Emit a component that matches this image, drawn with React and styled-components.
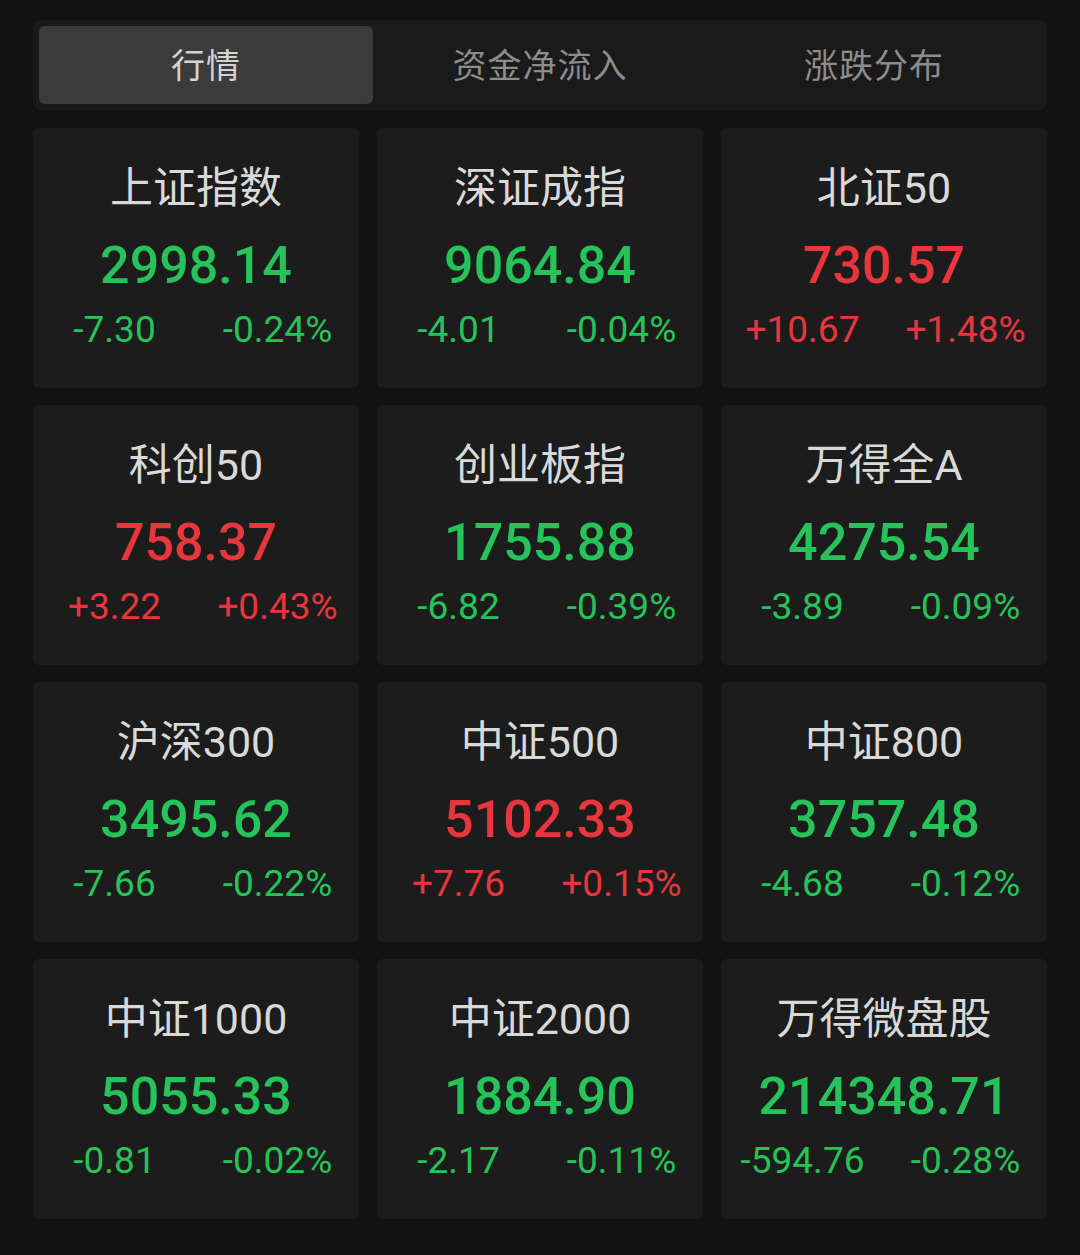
import React, { useState } from "react";
import styled, { createGlobalStyle } from "styled-components";

const GlobalStyle = createGlobalStyle`
  html, body {
    margin: 0;
    padding: 0;
    background: #121212;
  }
  body {
    font-family: Roboto, "Noto Sans CJK SC", sans-serif;
  }
`;

const tabs = ["行情", "资金净流入", "涨跌分布"];

const indices = [
  { name: "上证指数", price: "2998.14", change: "-7.30", pct: "-0.24%", up: false },
  { name: "深证成指", price: "9064.84", change: "-4.01", pct: "-0.04%", up: false },
  { name: "北证50", price: "730.57", change: "+10.67", pct: "+1.48%", up: true },
  { name: "科创50", price: "758.37", change: "+3.22", pct: "+0.43%", up: true },
  { name: "创业板指", price: "1755.88", change: "-6.82", pct: "-0.39%", up: false },
  { name: "万得全A", price: "4275.54", change: "-3.89", pct: "-0.09%", up: false },
  { name: "沪深300", price: "3495.62", change: "-7.66", pct: "-0.22%", up: false },
  { name: "中证500", price: "5102.33", change: "+7.76", pct: "+0.15%", up: true },
  { name: "中证800", price: "3757.48", change: "-4.68", pct: "-0.12%", up: false },
  { name: "中证1000", price: "5055.33", change: "-0.81", pct: "-0.02%", up: false },
  { name: "中证2000", price: "1884.90", change: "-2.17", pct: "-0.11%", up: false },
  { name: "万得微盘股", price: "214348.71", change: "-594.76", pct: "-0.28%", up: false },
];

const App = () => {
  const [active, setActive] = useState(0);

  return (
    <Page>
      <GlobalStyle />
      <TabBar>
        {tabs.map((t, i) => (
          <Tab key={t} active={i === active} onClick={() => setActive(i)}>
            {t}
          </Tab>
        ))}
      </TabBar>
      <Grid>
        {indices.map((item) => (
          <Card key={item.name}>
            <Name>{item.name}</Name>
            <Price up={item.up}>{item.price}</Price>
            <Changes>
              <Change up={item.up}>{item.change}</Change>
              <Change up={item.up}>{item.pct}</Change>
            </Changes>
          </Card>
        ))}
      </Grid>
    </Page>
  );
};

export default App;

const Page = styled.div`
  min-height: 1255px;
  box-sizing: border-box;
  padding: 20px 33px 0 33px;
  background: #121212;
`;

const TabBar = styled.div`
  display: grid;
  grid-template-columns: repeat(3, 1fr);
  padding: 6px;
  background: #1a1a1a;
  border-radius: 8px;
  width: 1014px;
  box-sizing: border-box;
`;

const Tab = styled.div`
  height: 78px;
  display: flex;
  align-items: center;
  justify-content: center;
  padding-bottom: 3px;
  box-sizing: border-box;
  border-radius: 6px;
  font-family: "Noto Sans CJK SC", sans-serif;
  font-size: 34px;
  letter-spacing: 1px;
  color: ${(p) => (p.active ? "#d4d4d4" : "#8c8c8c")};
  background: ${(p) => (p.active ? "#3b3b3b" : "transparent")};
  cursor: pointer;
`;

const Grid = styled.div`
  display: grid;
  grid-template-columns: repeat(3, 326px);
  column-gap: 18px;
  row-gap: 17px;
  margin-top: 18px;
`;

const Card = styled.div`
  height: 260px;
  box-sizing: border-box;
  padding-top: 32px;
  background: #1c1c1c;
  border-radius: 6px;
  display: flex;
  flex-direction: column;
  align-items: stretch;
`;

const Name = styled.div`
  height: 56px;
  line-height: 56px;
  text-align: center;
  font-family: Roboto, "Noto Sans CJK SC", sans-serif;
  font-size: 43px;
  color: #d9d9d9;
`;

const Price = styled.div`
  height: 64px;
  line-height: 64px;
  margin-top: 18px;
  text-align: center;
  font-size: 52px;
  font-weight: 500;
  color: ${(p) => (p.up ? "#e8363c" : "#26c25a")};
`;

const Changes = styled.div`
  display: grid;
  grid-template-columns: 1fr 1fr;
  height: 50px;
  line-height: 50px;
  margin-top: 7px;
`;

const Change = styled.span`
  text-align: center;
  font-size: 37px;
  color: ${(p) => (p.up ? "#e8363c" : "#26c25a")};
`;
